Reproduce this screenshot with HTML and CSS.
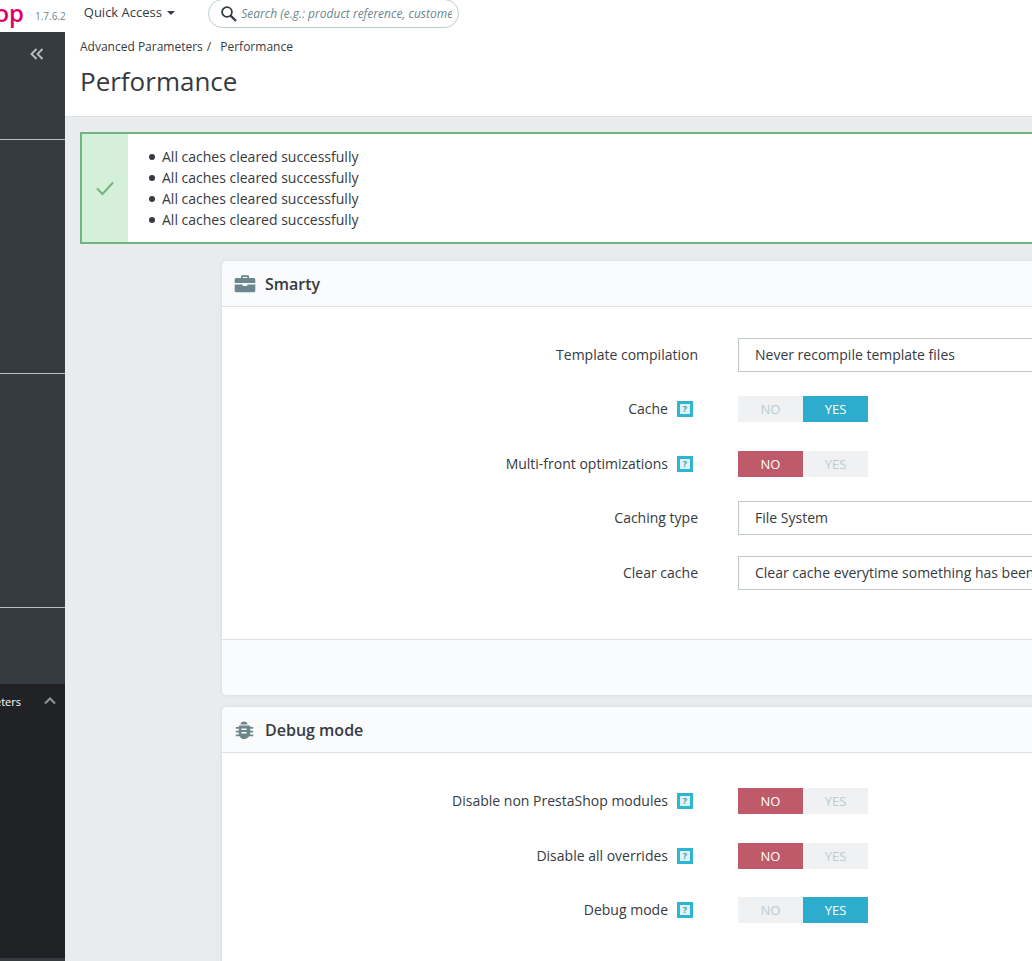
FILE: index.html
```html
<!DOCTYPE html>
<html lang="en">
<head>
    <meta charset="UTF-8">
    <meta name="viewport" content="width=device-width, initial-scale=1.0">
    <title>Performance</title>
    <link rel="stylesheet" href="styles.css">
</head>
<body>
    <header class="topbar">
        <div class="logo"><span>PrestaShop</span></div>
        <span class="version">1.7.6.2</span>
        <div class="quick-access">Quick Access <i class="caret"></i></div>
        <div class="search">
            <svg width="18" height="18" viewBox="0 0 18 18"><circle cx="7" cy="7" r="4.9" fill="none" stroke="#363a41" stroke-width="1.8"/><path d="M10.6 10.6L16 16" stroke="#363a41" stroke-width="2.2" fill="none"/></svg>
            <span class="search-text">Search (e.g.: product reference, customer name...)</span>
        </div>
    </header>

    <div class="layout">
        <nav class="sidebar">
            <div class="side-top">
                <svg class="collapse" width="14" height="12" viewBox="0 0 14 12"><path d="M6.5 1L1.5 6l5 5M12.5 1l-5 5 5 5" fill="none" stroke="#bcc3c8" stroke-width="1.8"/></svg>
            </div>
            <div class="side-block first"></div>
            <div class="side-block"></div>
            <div class="side-block"></div>
            <div class="side-active">
                <div class="side-item">
                    <div class="side-label"><span>Advanced Parameters</span></div>
                    <svg width="12" height="8" viewBox="0 0 12 8"><path d="M1 6.5l5-5 5 5" fill="none" stroke="#8e979c" stroke-width="2"/></svg>
                </div>
            </div>
            <div class="side-foot"></div>
        </nav>

        <main class="main">
            <div class="page-head">
                <div class="breadcrumb"><span>Advanced Parameters</span><span class="sep">/</span><span>Performance</span></div>
                <h1>Performance</h1>
            </div>

            <div class="content">
                <div class="alert">
                    <div class="alert-icon">
                        <svg width="20" height="16" viewBox="0 0 20 16"><path d="M2 8.5l5.5 5.5L18 2.5" fill="none" stroke="#70b580" stroke-width="2"/></svg>
                    </div>
                    <ul class="alert-list">
                        <li>All caches cleared successfully</li>
                        <li>All caches cleared successfully</li>
                        <li>All caches cleared successfully</li>
                        <li>All caches cleared successfully</li>
                    </ul>
                </div>

                <section class="card">
                    <div class="card-head">
                        <svg width="22" height="18" viewBox="0 0 22 18"><path d="M7 3V1.6C7 .8 7.6.3 8.3.3h5.4c.7 0 1.3.5 1.3 1.3V3h4.6c1 0 1.7.7 1.7 1.7V8H.7V4.700C.7 3.700 1.400 3 2.400 3zM8.700 3h4.600V2H8.700zM.7 9.500h8V11h4.600V9.500h8v6c0 1-.7 1.700-1.700 1.700H2.400c-1 0-1.700-.7-1.700-1.700z" fill="#6c868e"/></svg>
                        <h2>Smarty</h2>
                    </div>
                    <div class="card-body smarty-body">
                        <div class="form-row">
                            <label class="row-label">Template compilation</label>
                            <div class="select">Never recompile template files</div>
                        </div>
                        <div class="form-row">
                            <label class="row-label">Cache <i class="help">?</i></label>
                            <div class="switch"><span class="off">NO</span><span class="on-yes">YES</span></div>
                        </div>
                        <div class="form-row">
                            <label class="row-label">Multi-front optimizations <i class="help">?</i></label>
                            <div class="switch"><span class="on-no">NO</span><span class="off">YES</span></div>
                        </div>
                        <div class="form-row">
                            <label class="row-label">Caching type</label>
                            <div class="select">File System</div>
                        </div>
                        <div class="form-row">
                            <label class="row-label">Clear cache</label>
                            <div class="select">Clear cache everytime something has been modified</div>
                        </div>
                    </div>
                    <div class="card-foot"></div>
                </section>

                <section class="card">
                    <div class="card-head">
                        <svg width="20" height="20" viewBox="0 0 20 20"><path d="M6.500 4.500C6.500 2.600 8 1.500 10 1.500s3.500 1.100 3.500 3zM4.800 5.500h10.400c.6 0 1 .4 1 1V7h3v1.800h-3v2h3v1.800h-3v.9c0 .3 0 .6-.1.900l3.100 0v1.800h-3.900C13.300 18.300 11.800 19 10 19s-3.300-.7-4.300-2.800H1.800v-1.800l3.100 0c-.1-.3-.1-.6-.1-.9v-.9h-3v-1.800h3v-2h-3V7h3v-.5c0-.6.4-1 1-1z" fill="#6c868e"/><path d="M7.500 9.300h5M7.500 12.700h5" stroke="#fafbfc" stroke-width="1.500"/></svg>
                        <h2>Debug mode</h2>
                    </div>
                    <div class="card-body debug-body">
                        <div class="form-row">
                            <label class="row-label">Disable non PrestaShop modules <i class="help">?</i></label>
                            <div class="switch"><span class="on-no">NO</span><span class="off">YES</span></div>
                        </div>
                        <div class="form-row">
                            <label class="row-label">Disable all overrides <i class="help">?</i></label>
                            <div class="switch"><span class="on-no">NO</span><span class="off">YES</span></div>
                        </div>
                        <div class="form-row">
                            <label class="row-label">Debug mode <i class="help">?</i></label>
                            <div class="switch"><span class="off">NO</span><span class="on-yes">YES</span></div>
                        </div>
                    </div>
                </section>
            </div>
        </main>
    </div>
</body>
</html>
```

FILE: styles.css
```css
html, body {
    height: 100%;
}
body {
    font-family: "Open Sans", sans-serif;
    font-size: 14px;
    color: #363a41;
    background-color: #eaebec;
    margin: 0;
    padding: 0;
    overflow: hidden;
}
.topbar {
    height: 32px;
    background-color: #fff;
    display: flex;
    align-items: flex-start;
}
.logo {
    width: 24px;
    height: 32px;
    overflow: hidden;
    display: flex;
    justify-content: flex-end;
    flex-shrink: 0;
}
.logo span {
    font-size: 24px;
    font-weight: 600;
    line-height: 26px;
    color: #df0067;
    white-space: nowrap;
    flex-shrink: 0;
}
.version {
    font-size: 10px;
    color: #6c868e;
    margin: 9px 0 0 11px;
    line-height: 14px;
}
.quick-access {
    font-size: 13px;
    line-height: 18px;
    margin: 3px 0 0 18px;
}
.caret {
    display: inline-block;
    border: 4px solid transparent;
    border-top: 4px solid #363a41;
    border-bottom: 0;
    margin-left: 2px;
    vertical-align: 2px;
}
.search {
    width: 251px;
    height: 29px;
    box-sizing: border-box;
    margin: -1px 0 0 33px;
    padding: 0 6px 0 11px;
    border: 1px solid #bbcdd2;
    border-radius: 15px;
    display: flex;
    align-items: center;
    overflow: hidden;
}
.search svg {
    flex-shrink: 0;
}
.search-text {
    font-size: 12px;
    font-style: italic;
    color: #6c868e;
    margin-left: 3px;
    white-space: nowrap;
    overflow: hidden;
}
.layout {
    display: flex;
    height: 929px;
}
.sidebar {
    width: 65px;
    flex-shrink: 0;
    background-color: #363a41;
    display: flex;
    flex-direction: column;
    overflow: hidden;
}
.side-top {
    height: 43px;
    display: flex;
    justify-content: flex-end;
    align-items: flex-start;
    padding: 16px 21px 0 0;
    box-sizing: border-box;
}
.side-block {
    height: 233px;
    border-bottom: 1px solid #bebebe;
}
.side-block.first {
    height: 64px;
}
.side-active {
    flex: 1;
    margin-top: 76px;
    background-color: #202226;
}
.side-foot {
    height: 3px;
}
.side-item {
    height: 34px;
    display: flex;
    align-items: center;
    justify-content: space-between;
    padding: 0 9px 0 0;
}
.side-label {
    width: 21px;
    overflow: hidden;
    display: flex;
    justify-content: flex-end;
}
.side-label span {
    font-size: 11px;
    color: #fff;
    white-space: nowrap;
    flex-shrink: 0;
}
.main {
    flex: 1;
    min-width: 0;
    overflow: hidden;
}
.page-head {
    height: 77px;
    background-color: #fff;
    border-bottom: 1px solid #dfe2e4;
    padding: 7px 0 0 15px;
}
.breadcrumb {
    font-size: 12px;
    line-height: 16px;
}
.breadcrumb .sep {
    margin: 0 9px 0 4px;
}
h1 {
    font-size: 26px;
    font-weight: 400;
    line-height: 34px;
    margin: 9px 0 0;
}
.content {
    padding: 15px 0 0 15px;
    width: 1000px;
}
.alert {
    display: flex;
    height: 112px;
    box-sizing: border-box;
    border: 2px solid #70b580;
    background-color: #fff;
}
.alert-icon {
    width: 46px;
    background-color: #d5f0d8;
    display: flex;
    align-items: center;
    justify-content: center;
}
.alert-list {
    list-style: none;
    margin: 12px 0 0;
    padding: 0 0 0 21px;
    line-height: 21px;
}
.alert-list li {
    display: flex;
    align-items: center;
}
.alert-list li::before {
    content: "";
    width: 6px;
    height: 6px;
    border-radius: 50%;
    background-color: #363a41;
    margin-right: 7px;
}
.card {
    margin: 17px 0 0 142px;
    width: 900px;
    background-color: #fff;
    border-radius: 5px 0 0 5px;
    box-shadow: 0 0 4px rgba(0, 0, 0, 0.08);
}
.card + .card {
    margin-top: 12px;
}
.card-head {
    height: 46px;
    box-sizing: border-box;
    background-color: #fafbfc;
    border-bottom: 1px solid #dfe2e4;
    border-radius: 5px 0 0 0;
    display: grid;
    grid-template-columns: 21px auto;
    column-gap: 10px;
    justify-content: start;
    align-items: center;
    padding-left: 12px;
}
.card-head h2 {
    font-size: 16px;
    font-weight: 600;
    margin: 0;
}
.card-body {
    display: flex;
    flex-direction: column;
}
.smarty-body {
    height: 332px;
    box-sizing: border-box;
    padding-top: 30.6px;
}
.debug-body {
    padding-top: 31px;
    height: 300px;
    box-sizing: border-box;
}
.form-row {
    height: 34px;
    margin-bottom: 20.5px;
    display: flex;
    align-items: center;
}
.row-label {
    width: 476px;
    flex-shrink: 0;
    display: flex;
    justify-content: flex-end;
    align-items: center;
    margin: 0 40px 1px 0;
    white-space: nowrap;
}
.help {
    width: 16px;
    height: 16px;
    box-sizing: border-box;
    border: 3px solid #2fb5d2;
    background-color: #dcf4f9;
    color: #4a97ac;
    font-size: 9px;
    font-style: normal;
    font-weight: 700;
    line-height: 10px;
    text-align: center;
    margin: 1px 5px 0 9px;
}
.select {
    width: 400px;
    height: 34px;
    box-sizing: border-box;
    border: 1px solid #bfc9cc;
    padding: 0 16px;
    line-height: 32px;
    white-space: nowrap;
}
.switch {
    display: flex;
    width: 130px;
    height: 26px;
    font-size: 13px;
    line-height: 26px;
    text-align: center;
}
.switch span {
    width: 65px;
}
.off {
    background-color: #eff1f2;
    color: #bbcdd2;
}
.on-yes {
    background-color: #2eacce;
    color: #fff;
}
.on-no {
    background-color: #bf5a6a;
    color: #fff;
}
.card-foot {
    height: 55px;
    background-color: #fafbfc;
    border-top: 1px solid #dfe2e4;
    border-radius: 0 0 0 5px;
}
```
